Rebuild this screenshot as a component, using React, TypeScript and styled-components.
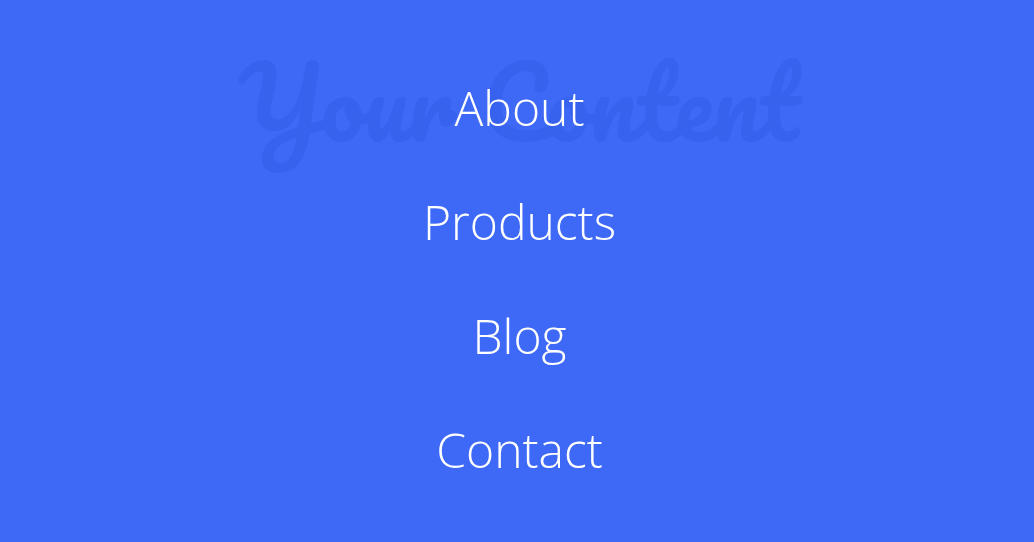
import React from "react";
import styled, { createGlobalStyle } from "styled-components";

const GlobalStyle = createGlobalStyle`
  * { box-sizing: border-box; }
  body { margin: 0; background: #3d69f6; font-family: "Open Sans", sans-serif; }
`;

const Page = styled.div`
  display: grid;
  min-height: 100vh;
  overflow: hidden;
`;

const Heading = styled.h1`
  grid-area: 1 / 1;
  margin: 0;
  padding: 31px 0 0 4px;
  text-align: center;
  color: #3762ee;
  font: 400 96px/140px Pacifico, "Liberation Serif", cursive;
`;

const Overlay = styled.nav`
  grid-area: 1 / 1;
  position: relative;
  will-change: transform;
`;

const Menu = styled.ul`
  list-style: none;
  margin: 0;
  padding: 75px 0 0 5px;
  display: flex;
  flex-direction: column;
  align-items: center;
  gap: 48px;
`;

const MenuLink = styled.a`
  display: block;
  color: #fff;
  font-size: 48px;
  font-weight: 300;
  line-height: 66px;
  text-decoration: none;
`;

const links = ["About", "Products", "Blog", "Contact"];

export default function App() {
  return (
    <Page>
      <GlobalStyle />
      <Heading>Your Content</Heading>
      <Overlay>
        <Menu>
          {links.map((label) => (
            <li key={label}>
              <MenuLink href={`#${label.toLowerCase()}`}>{label}</MenuLink>
            </li>
          ))}
        </Menu>
      </Overlay>
    </Page>
  );
}
